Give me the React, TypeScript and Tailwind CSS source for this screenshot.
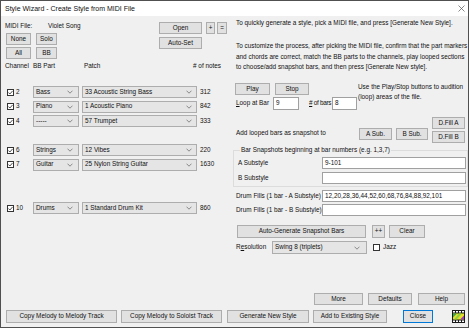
import React from "react";

const rows = [
  { ch: 2, part: "Bass", patch: "33 Acoustic String Bass", notes: 312 },
  { ch: 3, part: "Piano", patch: "1 Acoustic Piano", notes: 842 },
  { ch: 4, part: "-----", patch: "57 Trumpet", notes: 333 },
  null,
  { ch: 6, part: "Strings", patch: "12 Vibes", notes: 220 },
  { ch: 7, part: "Guitar", patch: "25 Nylon String Guitar", notes: 1630 },
  null,
  null,
  { ch: 10, part: "Drums", patch: "1 Standard Drum Kit", notes: 860 },
];

const Btn = ({ children, className = "" }: { children: React.ReactNode; className?: string }) => (
  <button className={`flex items-center justify-center bg-[#e1e1e1] border border-[#adadad] leading-none whitespace-nowrap ${className}`}>
    {children}
  </button>
);

const Chevron = () => (
  <svg width="6" height="4" viewBox="0 0 6 4">
    <path d="M0.5 0.7 L3 3.2 L5.5 0.7" fill="none" stroke="#707070" strokeWidth="0.8" />
  </svg>
);

const Combo = ({ value, className = "" }: { value: string; className?: string }) => (
  <div className={`h-[12px] flex items-center justify-between bg-[#e5e5e5] border border-[#adadad] pl-[2px] pr-[4px] ${className}`}>
    <span className="whitespace-nowrap">{value}</span>
    <Chevron />
  </div>
);

const Check = ({ checked = false }: { checked?: boolean }) => (
  <span className="w-[7px] h-[7px] border border-[#333] bg-white flex items-center justify-center shrink-0">
    {checked && (
      <svg width="5" height="5" viewBox="0 0 5 5">
        <path d="M0.4 2.5 L1.9 4 L4.6 0.9" fill="none" stroke="#222" strokeWidth="0.8" />
      </svg>
    )}
  </span>
);

const Field = ({ value = "", className = "" }: { value?: string; className?: string }) => (
  <div className={`h-[12px] bg-white border border-[#a0a0a0] pl-[2px] flex items-center whitespace-nowrap ${className}`}>{value}</div>
);

const FilmIcon = () => (
  <svg width="13" height="13" viewBox="0 0 13 13">
    <rect x="0" y="0" width="13" height="13" fill="#1a1a1a" />
    {[1, 4, 7, 10].map((x) => (
      <rect key={"t" + x} x={x} y="1" width="2" height="1.5" fill="#fff" />
    ))}
    {[1, 4, 7, 10].map((x) => (
      <rect key={"b" + x} x={x} y="10.5" width="2" height="1.5" fill="#fff" />
    ))}
    <rect x="1" y="3.5" width="11" height="6" fill="#e8e020" />
    <path d="M1 3.5 H5 L1 7.5 Z" fill="#3aa84a" />
    <path d="M7 3.5 H10 L4.5 9.5 H2 Z" fill="#8ad04a" />
    <path d="M12 5.5 V9.5 H8 Z" fill="#9a3fb8" />
  </svg>
);

export default function App() {
  return (
    <div className="w-[469px] h-[328px] bg-[#f0f0f0] border border-[#505050] flex flex-col overflow-hidden text-[6.4px] leading-none text-[#111] font-['Liberation_Sans',Arial,sans-serif]">
      <div className="h-[15px] bg-white flex items-center justify-between pl-[4px] pr-[3px] shrink-0">
        <span className="text-[7px]">Style Wizard - Create Style from MIDI File</span>
        <svg width="7" height="7" viewBox="0 0 7 7">
          <path d="M0.5 0.5 L6.5 6.5 M6.5 0.5 L0.5 6.5" stroke="#555" strokeWidth="0.7" />
        </svg>
      </div>

      <div className="flex flex-1 min-h-0">
        {/* left column */}
        <div className="w-[229px] shrink-0 pl-[4px] pr-[3px] pt-[6px] flex flex-col">
          <div className="flex justify-between">
            <div className="flex flex-col">
              <div className="h-[8px] flex items-center">
                <span className="w-[43px]">MIDI File:</span>
                <span>Violet Song</span>
              </div>
              <div className="grid grid-cols-[25px_21px] gap-x-[5px] gap-y-[2px] mt-[3px] ml-[1px]">
                <Btn className="h-[12px]">None</Btn>
                <Btn className="h-[12px]">Solo</Btn>
                <Btn className="h-[12px]">All</Btn>
                <Btn className="h-[12px]">BB</Btn>
              </div>
            </div>
            <div className="flex flex-col items-start">
              <div className="flex">
                <Btn className="w-[43px] h-[12px]">Open</Btn>
                <Btn className="w-[9px] h-[12px] ml-[4px]">+</Btn>
                <Btn className="w-[10px] h-[12px] ml-[2px]">=</Btn>
              </div>
              <Btn className="w-[43px] h-[12px] mt-[3px]">Auto-Set</Btn>
            </div>
          </div>

          <div className="flex h-[8px] items-center mt-[3px]">
            <span className="w-[28px]">Channel</span>
            <span className="w-[51px]">BB Part</span>
            <span className="w-[109px]">Patch</span>
            <span># of notes</span>
          </div>

          <div className="flex flex-col gap-[2.5px] mt-[16px]">
            {rows.map((r, i) =>
              r ? (
                <div key={i} className="flex items-center h-[12px]">
                  <div className="w-[28px] flex items-center">
                    <span className="ml-[2px]"><Check checked /></span>
                    <span className="ml-[2px]">{r.ch}</span>
                  </div>
                  <Combo value={r.part} className="w-[46px] pr-[5px]" />
                  <Combo value={r.patch} className="w-[115px] ml-[3px]" />
                  <span className="ml-[3px]">{r.notes}</span>
                </div>
              ) : (
                <div key={i} className="h-[12px]" />
              )
            )}
          </div>
        </div>

        {/* right column */}
        <div className="flex-1 min-w-0 pl-[3px] pt-[2px] flex flex-col">
          <div className="h-[10px] flex items-center pl-[3px] whitespace-nowrap">
            To quickly generate a style, pick a MIDI file, and press [Generate New Style].
          </div>
          <div className="mt-[13px] leading-[10.5px] pl-[3px] whitespace-nowrap">
            <div>To customize the process, after picking the MIDI file, confirm that the part markers</div>
            <div>and chords are correct, match the BB parts to the channels, play looped sections</div>
            <div>to choose/add snapshot bars, and then press [Generate New style].</div>
          </div>

          <div className="flex mt-[10.5px]">
            <div className="w-[124px] shrink-0 flex flex-col">
              <div className="flex h-[12px]">
                <Btn className="w-[35px] h-[12px] ml-[2px]">Play</Btn>
                <Btn className="w-[34px] h-[12px] ml-[5px]">Stop</Btn>
              </div>
              <div className="flex items-center h-[13px] mt-[2px] pl-[3px]">
                <span className="w-[37px] whitespace-nowrap"><span className="underline">L</span>oop at Bar</span>
                <Field value="9" className="w-[26px] h-[13px]" />
                <span className="ml-[10px] w-[23px] whitespace-nowrap tracking-[-0.3px]"><span className="underline">#</span> of bars</span>
                <Field value="8" className="w-[25px] h-[13px]" />
              </div>
            </div>
            <div className="ml-[1px] -mt-[1px] leading-[10px] whitespace-nowrap">
              <div>Use the Play/Stop buttons to audition</div>
              <div>(loop) areas of the file.</div>
            </div>
          </div>

          <div className="flex items-start mt-[7px] pl-[3px]">
            <span className="w-[123px] h-[8px] mt-[12px] flex items-center">Add looped bars as snapshot to</span>
            <Btn className="w-[33px] h-[12px] mt-[11px]">A Sub.</Btn>
            <Btn className="w-[32px] h-[12px] mt-[11px] ml-[4px]">B Sub.</Btn>
            <div className="flex flex-col ml-[4px]">
              <Btn className="w-[33px] h-[12px]">D.Fill A</Btn>
              <Btn className="w-[33px] h-[12px] mt-[2px]">D.Fill B</Btn>
            </div>
          </div>

          <fieldset className="mt-[3px] border border-[#dcdcdc] pl-[4px] pt-[3px] pb-[2px] flex flex-col gap-[3px]">
            <legend className="ml-[2px] px-[1px] leading-[8px]">Bar Snapshots beginning at bar numbers (e.g. 1,3,7)</legend>
            <div className="flex items-center">
              <span className="w-[84px]">A Substyle</span>
              <Field value="9-101" className="w-[144px]" />
            </div>
            <div className="flex items-center">
              <span className="w-[84px]">B Substyle</span>
              <Field className="w-[144px]" />
            </div>
          </fieldset>

          <div className="flex flex-col gap-[2px] mt-[3px] pl-[3px]">
            <div className="flex items-center">
              <span className="w-[86px] whitespace-nowrap">Drum Fills (1 bar - A Substyle)</span>
              <Field value="12,20,28,36,44,52,60,68,76,84,88,92,101" className="w-[144px]" />
            </div>
            <div className="flex items-center">
              <span className="w-[86px] whitespace-nowrap">Drum Fills (1 bar - B Substyle)</span>
              <Field className="w-[144px]" />
            </div>
          </div>

          <div className="flex mt-[9px] pl-[4px]">
            <Btn className="w-[129px] h-[13px]">Auto-Generate Snapshot Bars</Btn>
            <Btn className="w-[13px] h-[13px] ml-[6px]">++</Btn>
            <Btn className="w-[36px] h-[13px] ml-[4px]">Clear</Btn>
          </div>

          <div className="flex items-center h-[13px] mt-[3px] pl-[3px]">
            <span className="w-[36px]">R<span className="underline">e</span>solution</span>
            <Combo value="Swing 8 (triplets)" className="w-[95px] h-[13px] pr-[6px]" />
            <span className="ml-[6px]"><Check /></span>
            <span className="ml-[3px]">Jazz</span>
          </div>

          <div className="flex-1" />
          <div className="flex justify-end pr-[3px] mb-[1px]">
            <Btn className="w-[49px] h-[12px]">More</Btn>
            <Btn className="w-[44px] h-[12px] ml-[5px]">Defaults</Btn>
            <Btn className="w-[47px] h-[12px] ml-[6px]">Help</Btn>
          </div>
        </div>
      </div>

      <div className="flex items-center h-[13px] mt-[4px] mb-[4px] pl-[5px] shrink-0">
        <Btn className="w-[111px] h-[13px]">Copy Melody to Melody Track</Btn>
        <Btn className="w-[101px] h-[13px] ml-[4px]">Copy Melody to Soloist Track</Btn>
        <Btn className="w-[82px] h-[13px] ml-[5px]">Generate New Style</Btn>
        <Btn className="w-[74px] h-[13px] ml-[4px]">Add to Existing Style</Btn>
        <Btn className="w-[30px] h-[13px] ml-[16px] !border-[#0078d7]">Close</Btn>
        <span className="ml-[19px]"><FilmIcon /></span>
      </div>
    </div>
  );
}
